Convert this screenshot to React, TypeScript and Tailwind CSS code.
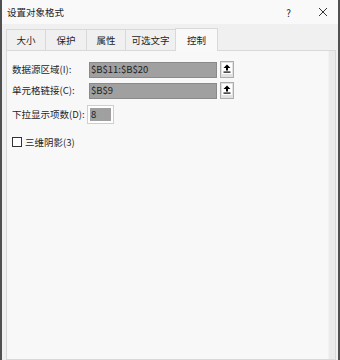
const font = { fontFamily: '"Microsoft YaHei", "Noto Sans CJK SC", sans-serif' };

function RefButton() {
  return (
    <div className="w-[14px] h-[17px] border border-[#adadad] bg-[#e1e1e1] flex items-start justify-center pt-[1px]">
      <div className="w-[10px] h-[11px] bg-white flex items-center justify-center">
        <svg width="8" height="9" viewBox="0 0 8 9">
          <path d="M4 0.5 L7.5 4 L5 4 L5 6.5 L3 6.5 L3 4 L0.5 4 Z" fill="#000" />
          <rect x="0.5" y="7.5" width="7" height="1.2" fill="#000" />
        </svg>
      </div>
    </div>
  );
}

function Field({ label, value }: { label: string; value: string }) {
  return (
    <div className="flex items-center h-[17px]">
      <span className="w-[77px] text-[9.5px] text-[#1e1e1e] whitespace-nowrap">{label}</span>
      <div className="w-[128px] h-[16px] bg-[#a0a0a0] border border-[#8a8a8a] flex items-center px-[1px] text-[9.5px] text-[#1e1e1e]">
        {value}
      </div>
      <div className="ml-[3px]">
        <RefButton />
      </div>
    </div>
  );
}

export default function App() {
  const tabs = [
    { t: '大小', w: 'w-[40px]' },
    { t: '保护', w: 'w-[42px]' },
    { t: '属性', w: 'w-[40px]' },
    { t: '可选文字', w: 'w-[51px]' },
  ];
  return (
    <div className="w-[340px] h-[360px] bg-[#f0f0f0] border-x-2 border-[#505050] flex flex-col" style={font}>
      <div className="h-[24px] bg-[#f9f9f9] flex items-center pl-[5px] pr-[10px] text-[9.5px] text-[#1e1e1e]">
        <span>设置对象格式</span>
        <span className="ml-auto mr-[27px] text-[10px]">?</span>
        <svg width="10" height="10" viewBox="0 0 10 10">
          <path d="M1 1 L9 9 M9 1 L1 9" stroke="#333" strokeWidth="1" />
        </svg>
      </div>
      <div className="flex items-end pl-[4px] h-[26px]">
        {tabs.map(({ t, w }) => (
          <div
            key={t}
            className={`${w} h-[21px] border border-b-0 border-[#d9d9d9] -ml-[1px] first:ml-0 bg-[#f0f0f0] flex items-center justify-center text-[9.5px] text-[#1e1e1e]`}
          >
            {t}
          </div>
        ))}
        <div className="w-[43px] h-[23px] border border-b-0 border-[#d9d9d9] bg-[#f9f9f9] -ml-[1px] flex items-center justify-center text-[9.5px] text-[#1e1e1e] relative top-[1px] z-10">
          控制
        </div>
      </div>
      <div className="flex-1 ml-[4px] mr-[2px] border border-[#d9d9d9] bg-[#f8f8f8] flex">
        <div className="flex-1 flex flex-col pt-[10px] pl-[5px] gap-[4px]">
          <Field label="数据源区域(I):" value="$B$11:$B$20" />
          <Field label="单元格链接(C):" value="$B$9" />
          <div className="flex items-center h-[19px] mt-[2px]">
            <span className="w-[75px] text-[9.5px] text-[#1e1e1e] whitespace-nowrap">下拉显示项数(D):</span>
            <div className="w-[27px] h-[19px] border border-[#cfcfcf] bg-white p-[2px]">
              <div className="w-full h-full bg-[#a0a0a0] text-[9.5px] text-[#1e1e1e] px-[1px] flex items-center">8</div>
            </div>
          </div>
          <div className="flex items-center h-[14px] mt-[7px] gap-[3px]">
            <div className="w-[10px] h-[10px] border border-[#333] bg-white" />
            <span className="text-[9.5px] text-[#1e1e1e]">三维阴影(3)</span>
          </div>
        </div>
        <div className="w-[7px] bg-[#ebebeb] border-l border-[#f2f2f2]" />
      </div>
    </div>
  );
}
